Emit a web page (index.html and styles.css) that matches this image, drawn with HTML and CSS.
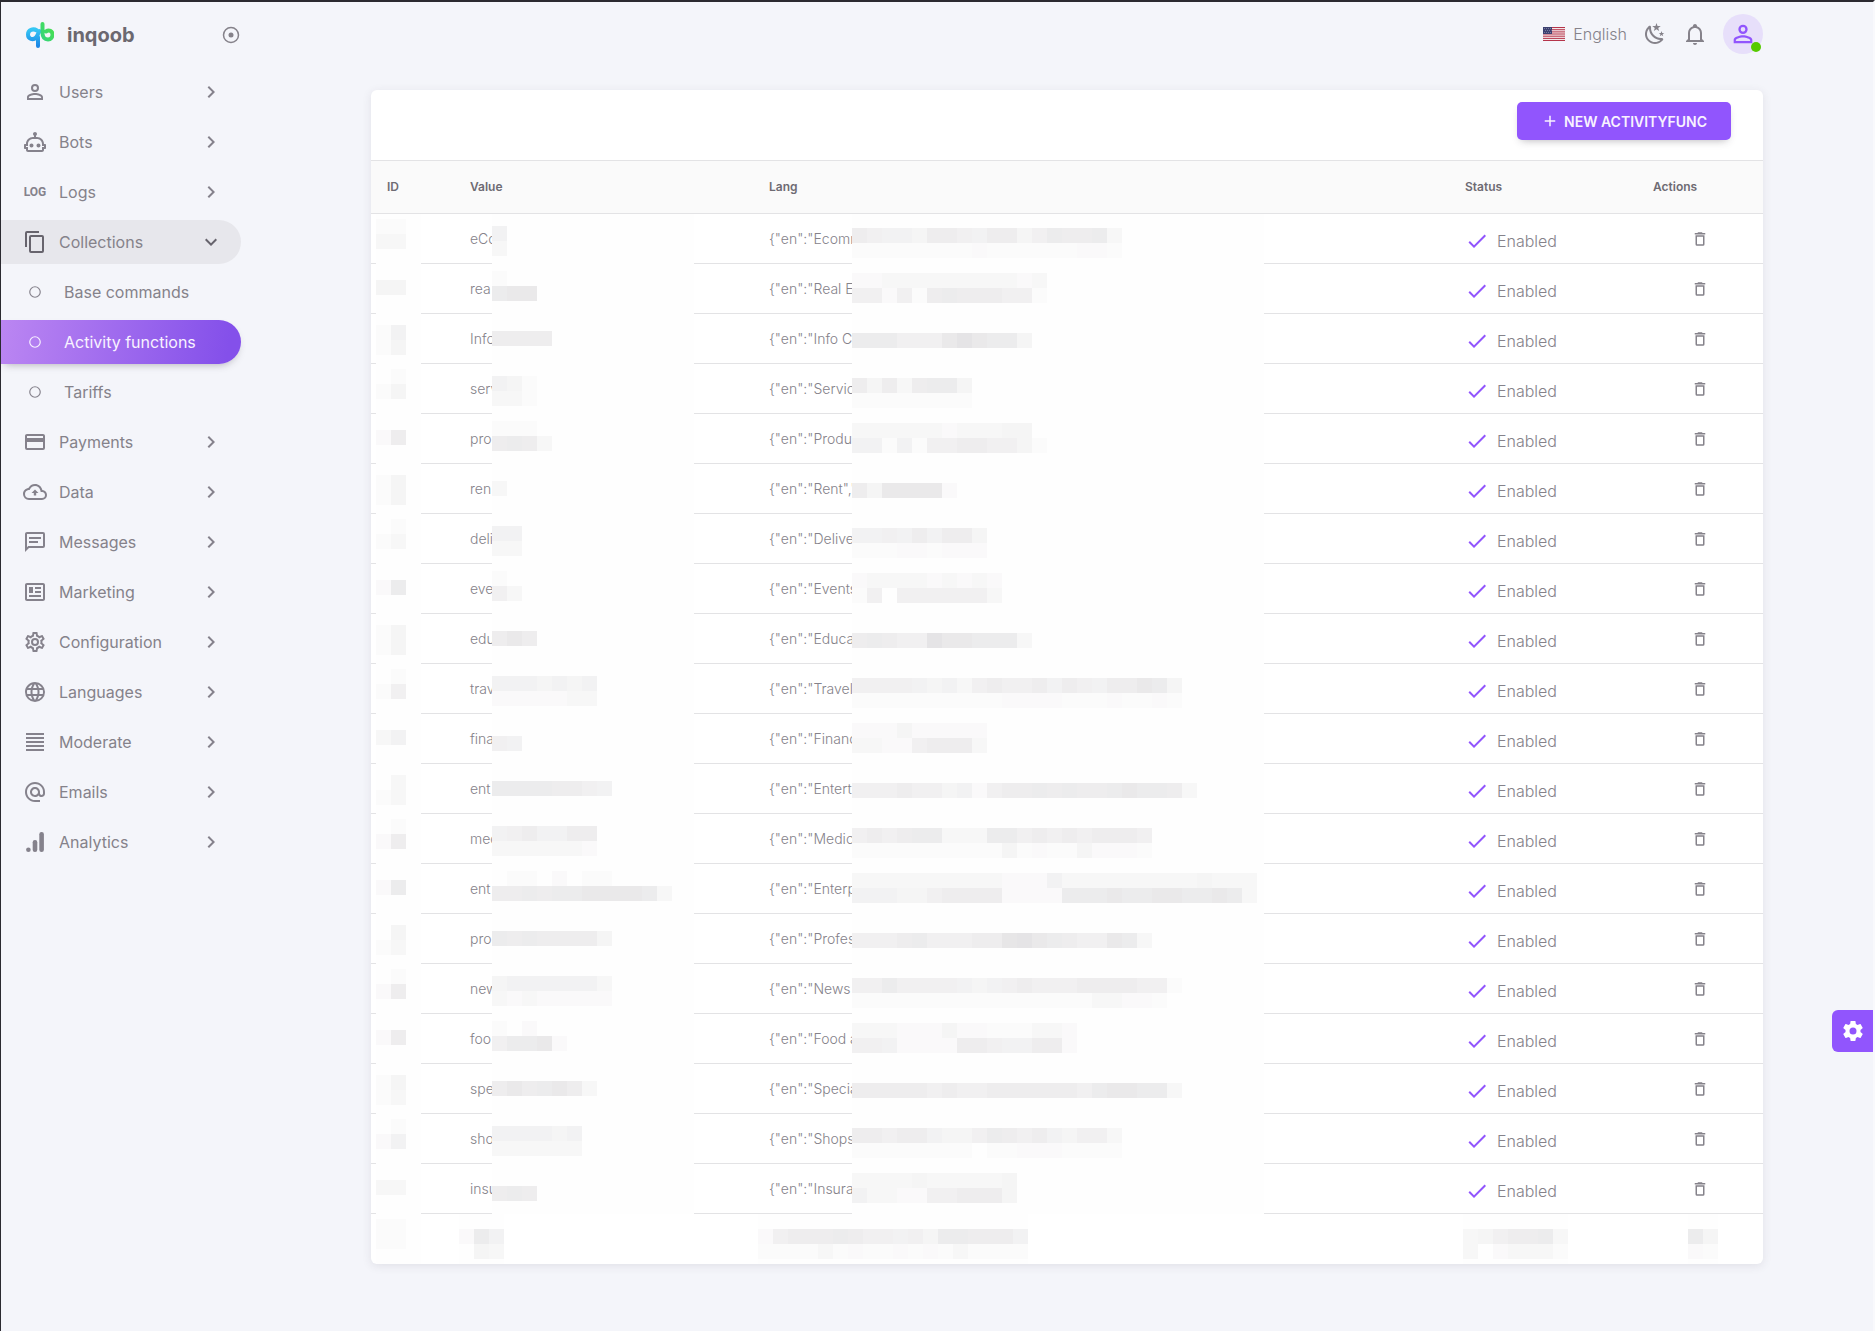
FILE: index.html
```html
<!DOCTYPE html>
<html lang="en">
<head>
    <meta charset="UTF-8">
    <meta name="viewport" content="width=device-width, initial-scale=1.0">
    <title>inqoob - Activity functions</title>
    <link rel="stylesheet" href="styles.css">
</head>
<body>
    <svg class="sprite" aria-hidden="true">
        <symbol id="chevron" viewBox="0 0 24 24"><path d="M8.59,16.58L13.17,12L8.59,7.41L10,6L16,12L10,18L8.59,16.58Z"/></symbol>
        <symbol id="account" viewBox="0 0 24 24"><path d="M12,4A4,4 0 0,1 16,8A4,4 0 0,1 12,12A4,4 0 0,1 8,8A4,4 0 0,1 12,4M12,6A2,2 0 0,0 10,8A2,2 0 0,0 12,10A2,2 0 0,0 14,8A2,2 0 0,0 12,6M12,13C14.67,13 20,14.33 20,17V20H4V17C4,14.33 9.33,13 12,13M12,14.9C9.03,14.9 5.9,16.36 5.9,17V18.1H18.1V17C18.1,16.36 14.97,14.9 12,14.9Z"/></symbol>
        <symbol id="robot" viewBox="0 0 24 24"><path d="M17.5 15.5C17.5 16.61 16.61 17.5 15.5 17.5S13.5 16.61 13.5 15.5 14.4 13.5 15.5 13.5 17.5 14.4 17.5 15.5M8.5 13.5C7.4 13.5 6.5 14.4 6.5 15.5S7.4 17.5 8.5 17.5 10.5 16.61 10.5 15.5 9.61 13.5 8.5 13.5M23 15V18C23 18.55 22.55 19 22 19H21V20C21 21.11 20.11 22 19 22H5C3.9 22 3 21.11 3 20V19H2C1.45 19 1 18.55 1 18V15C1 14.45 1.45 14 2 14H3C3 10.13 6.13 7 10 7H11V5.73C10.4 5.39 10 4.74 10 4C10 2.9 10.9 2 12 2S14 2.9 14 4C14 4.74 13.6 5.39 13 5.73V7H14C17.87 7 21 10.13 21 14H22C22.55 14 23 14.45 23 15M21 16H19V14C19 11.24 16.76 9 14 9H10C7.24 9 5 11.24 5 14V16H3V17H5V20H19V17H21V16Z"/></symbol>
        <symbol id="copy" viewBox="0 0 24 24"><path d="M19,21H8V7H19M19,5H8A2,2 0 0,0 6,7V21A2,2 0 0,0 8,23H19A2,2 0 0,0 21,21V7A2,2 0 0,0 19,5M16,1H4A2,2 0 0,0 2,3V17H4V3H16V1Z"/></symbol>
        <symbol id="ring" viewBox="0 0 24 24"><circle cx="12" cy="12" r="9" fill="none" stroke="currentColor" stroke-width="2"/></symbol>
        <symbol id="card" viewBox="0 0 24 24"><path d="M20,8H4V6H20M20,18H4V12H20M20,4H4C2.89,4 2,4.89 2,6V18A2,2 0 0,0 4,20H20A2,2 0 0,0 22,18V6C22,4.89 21.1,4 20,4Z"/></symbol>
        <symbol id="cloud" viewBox="0 0 24 24"><path d="M19.35,10.03C18.67,6.59 15.64,4 12,4C9.11,4 6.6,5.64 5.35,8.03C2.34,8.36 0,10.9 0,14A6,6 0 0,0 6,20H19A5,5 0 0,0 24,15C24,12.36 21.95,10.22 19.35,10.03M19,18H6A4,4 0 0,1 2,14C2,11.95 3.53,10.24 5.56,10.03L6.63,9.92L7.13,8.97C8.08,7.14 9.94,6 12,6C14.62,6 16.88,7.86 17.39,10.43L17.69,11.93L19.22,12.04C20.78,12.14 22,13.45 22,15A3,3 0 0,1 19,18M8.5,13H10.8V15.5H13.2V13H15.5L12,9.5L8.5,13Z"/></symbol>
        <symbol id="message" viewBox="0 0 24 24"><path d="M4,2H20A2,2 0 0,1 22,4V16A2,2 0 0,1 20,18H6L2,22V4C2,2.89 2.9,2 4,2M4,4V17.17L5.17,16H20V4H4M6,7H18V9H6V7M6,11H15V13H6V11Z"/></symbol>
        <symbol id="newspaper" viewBox="0 0 24 24"><path d="M20 5L20 19L4 19L4 5H20M20 3H4C2.89 3 2 3.89 2 5V19C2 20.11 2.89 21 4 21H20C21.11 21 22 20.11 22 19V5C22 3.89 21.11 3 20 3M18 15H6V17H18V15M10 7H6V13H10V7M12 9H18V7H12V9M18 11H12V13H18V11Z"/></symbol>
        <symbol id="cog-outline" viewBox="0 0 24 24"><path d="M12,8A4,4 0 0,1 16,12A4,4 0 0,1 12,16A4,4 0 0,1 8,12A4,4 0 0,1 12,8M12,10A2,2 0 0,0 10,12A2,2 0 0,0 12,14A2,2 0 0,0 14,12A2,2 0 0,0 12,10M10,22C9.75,22 9.54,21.82 9.5,21.58L9.13,18.93C8.5,18.68 7.96,18.34 7.44,17.94L4.95,18.95C4.73,19.03 4.46,18.95 4.34,18.73L2.34,15.27C2.21,15.05 2.27,14.78 2.46,14.63L4.57,12.97L4.5,12L4.57,11L2.46,9.37C2.27,9.22 2.21,8.95 2.34,8.73L4.34,5.27C4.46,5.05 4.73,4.96 4.95,5.05L7.44,6.05C7.96,5.66 8.5,5.32 9.13,5.07L9.5,2.42C9.54,2.18 9.75,2 10,2H14C14.25,2 14.46,2.18 14.5,2.42L14.87,5.07C15.5,5.32 16.04,5.66 16.56,6.05L19.05,5.05C19.27,4.96 19.54,5.05 19.66,5.27L21.66,8.73C21.79,8.95 21.73,9.22 21.54,9.37L19.43,11L19.5,12L19.43,13L21.54,14.63C21.73,14.78 21.79,15.05 21.66,15.27L19.66,18.73C19.54,18.95 19.27,19.04 19.05,18.95L16.56,17.95C16.04,18.34 15.5,18.68 14.87,18.93L14.5,21.58C14.46,21.82 14.25,22 14,22H10M11.25,4L10.88,6.61C9.68,6.86 8.62,7.5 7.85,8.39L5.44,7.35L4.69,8.65L6.8,10.2C6.4,11.37 6.4,12.64 6.8,13.8L4.68,15.36L5.43,16.66L7.86,15.62C8.63,16.5 9.68,17.14 10.87,17.38L11.24,20H12.76L13.13,17.39C14.32,17.14 15.37,16.5 16.14,15.62L18.57,16.66L19.32,15.36L17.2,13.81C17.6,12.64 17.6,11.37 17.2,10.2L19.31,8.65L18.56,7.35L16.15,8.39C15.38,7.5 14.32,6.86 13.12,6.62L12.75,4H11.25Z"/></symbol>
        <symbol id="web" viewBox="0 0 24 24"><path d="M16.36,14C16.44,13.34 16.5,12.68 16.5,12C16.5,11.32 16.44,10.66 16.36,10H19.74C19.9,10.64 20,11.31 20,12C20,12.69 19.9,13.36 19.74,14M14.59,19.56C15.19,18.45 15.65,17.25 15.97,16H18.92C17.96,17.65 16.43,18.93 14.59,19.56M14.34,14H9.66C9.56,13.34 9.5,12.68 9.5,12C9.5,11.32 9.56,10.65 9.66,10H14.34C14.43,10.65 14.5,11.32 14.5,12C14.5,12.68 14.43,13.34 14.34,14M12,19.96C11.17,18.76 10.5,17.43 10.09,16H13.91C13.5,17.43 12.83,18.76 12,19.96M8,8H5.08C6.03,6.34 7.57,5.06 9.4,4.44C8.8,5.55 8.35,6.75 8,8M5.08,16H8C8.35,17.25 8.8,18.45 9.4,19.56C7.57,18.93 6.03,17.65 5.08,16M4.26,14C4.1,13.36 4,12.69 4,12C4,11.31 4.1,10.64 4.26,10H7.64C7.56,10.66 7.5,11.32 7.5,12C7.5,12.68 7.56,13.34 7.64,14M12,4.03C12.83,5.23 13.5,6.57 13.91,8H10.09C10.5,6.57 11.17,5.23 12,4.03M18.92,8H15.97C15.65,6.75 15.19,5.55 14.59,4.44C16.43,5.07 17.96,6.34 18.92,8M12,2C6.47,2 2,6.5 2,12A10,10 0 0,0 12,22A10,10 0 0,0 22,12A10,10 0 0,0 12,2Z"/></symbol>
        <symbol id="lines" viewBox="0 0 24 24"><path d="M3,3H21V5H3V3M3,7H21V9H3V7M3,11H21V13H3V11M3,15H21V17H3V15M3,19H21V21H3V19Z"/></symbol>
        <symbol id="at" viewBox="0 0 24 24"><path d="M12,15C12.81,15 13.5,14.7 14.11,14.11C14.7,13.5 15,12.81 15,12C15,11.19 14.7,10.5 14.11,9.89C13.5,9.3 12.81,9 12,9C11.19,9 10.5,9.3 9.89,9.89C9.3,10.5 9,11.19 9,12C9,12.81 9.3,13.5 9.89,14.11C10.5,14.7 11.19,15 12,15M12,2C14.75,2 17.1,3 19.05,4.95C21,6.9 22,9.25 22,12V13.45C22,14.45 21.65,15.3 21,16C20.3,16.67 19.5,17 18.5,17C17.3,17 16.31,16.5 15.56,15.5C14.56,16.5 13.38,17 12,17C10.63,17 9.45,16.5 8.46,15.54C7.5,14.55 7,13.38 7,12C7,10.63 7.5,9.45 8.46,8.46C9.45,7.5 10.63,7 12,7C13.38,7 14.55,7.5 15.54,8.46C16.5,9.45 17,10.63 17,12V13.45C17,13.86 17.16,14.22 17.46,14.53C17.76,14.84 18.11,15 18.5,15C18.92,15 19.27,14.84 19.57,14.53C19.87,14.22 20,13.86 20,13.45V12C20,9.81 19.23,7.93 17.65,6.35C16.07,4.77 14.19,4 12,4C9.81,4 7.93,4.77 6.35,6.35C4.77,7.93 4,9.81 4,12C4,14.19 4.77,16.07 6.35,17.65C7.93,19.23 9.81,20 12,20H17V22H12C9.25,22 6.9,21 4.95,19.05C3,17.1 2,14.75 2,12C2,9.25 3,6.9 4.95,4.95C6.9,3 9.25,2 12,2Z"/></symbol>
        <symbol id="analytics" viewBox="0 0 24 24"><circle cx="5.4" cy="19.7" r="2.3"/><rect x="9.7" y="10" width="4.6" height="12" rx="2.2"/><rect x="16.3" y="2" width="4.6" height="20" rx="2.2"/></symbol>
        <symbol id="moon" viewBox="0 0 24 24"><path d="M17.75,4.09L15.22,6.03L16.13,9.09L13.5,7.28L10.87,9.09L11.78,6.03L9.25,4.09L12.44,4L13.5,1L14.56,4L17.75,4.09M21.25,11L19.61,12.25L20.2,14.23L18.5,13.06L16.8,14.23L17.39,12.25L15.75,11L17.81,10.95L18.5,9L19.19,10.95L21.25,11M18.97,15.95C19.8,15.87 20.69,17.05 20.16,17.8C19.84,18.25 19.5,18.67 19.08,19.07C15.17,23 8.84,23 4.94,19.07C1.03,15.17 1.03,8.83 4.94,4.93C5.34,4.53 5.76,4.17 6.21,3.85C6.96,3.32 8.14,4.21 8.06,5.04C7.79,7.9 8.75,10.87 10.95,13.06C13.14,15.26 16.1,16.22 18.97,15.95M17.33,17.97C14.5,17.81 11.7,16.64 9.53,14.5C7.36,12.31 6.2,9.5 6.04,6.68C3.23,9.82 3.34,14.64 6.35,17.66C9.37,20.67 14.19,20.78 17.33,17.97Z"/></symbol>
        <symbol id="bell" viewBox="0 0 24 24"><path d="M10 21H14C14 22.1 13.1 23 12 23S10 22.1 10 21M21 19V20H3V19L5 17V11C5 7.9 7.03 5.17 10 4.29C10 4.19 10 4.1 10 4C10 2.9 10.9 2 12 2S14 2.9 14 4C14 4.1 14 4.19 14 4.29C16.97 5.17 19 7.9 19 11V17L21 19M17 11C17 8.24 14.76 6 12 6S7 8.24 7 11V18H17V11Z"/></symbol>
        <symbol id="plus" viewBox="0 0 24 24"><path d="M19,13H13V19H11V13H5V11H11V5H13V11H19V13Z"/></symbol>
        <symbol id="check" viewBox="0 0 24 24"><path d="M21,7L9,19L3.5,13.5L4.91,12.09L9,16.17L19.59,5.59L21,7Z"/></symbol>
        <symbol id="trash" viewBox="0 0 24 24"><path d="M6,19A2,2 0 0,0 8,21H16A2,2 0 0,0 18,19V7H6V19M8,9H16V19H8V9M15.5,4L14.5,3H9.5L8.5,4H5V6H19V4H15.5Z"/></symbol>
        <symbol id="cog" viewBox="0 0 24 24"><path d="M12,15.5A3.5,3.5 0 0,1 8.5,12A3.5,3.5 0 0,1 12,8.5A3.5,3.5 0 0,1 15.5,12A3.5,3.5 0 0,1 12,15.5M19.43,12.97C19.47,12.65 19.5,12.33 19.5,12C19.5,11.67 19.47,11.34 19.43,11L21.54,9.37C21.73,9.22 21.78,8.95 21.66,8.73L19.66,5.27C19.54,5.05 19.27,4.96 19.05,5.05L16.56,6.05C16.04,5.66 15.5,5.32 14.87,5.07L14.5,2.42C14.46,2.18 14.25,2 14,2H10C9.75,2 9.54,2.18 9.5,2.42L9.13,5.07C8.5,5.32 7.96,5.66 7.44,6.05L4.95,5.05C4.73,4.96 4.46,5.05 4.34,5.27L2.34,8.73C2.21,8.95 2.27,9.22 2.46,9.37L4.57,11C4.53,11.34 4.5,11.67 4.5,12C4.5,12.33 4.53,12.65 4.57,12.97L2.46,14.63C2.27,14.78 2.21,15.05 2.34,15.27L4.34,18.73C4.46,18.95 4.73,19.03 4.95,18.95L7.44,17.94C7.96,18.34 8.5,18.68 9.13,18.93L9.5,21.58C9.54,21.82 9.75,22 10,22H14C14.25,22 14.46,21.82 14.5,21.58L14.87,18.93C15.5,18.67 16.04,18.34 16.56,17.94L19.05,18.95C19.27,19.03 19.54,18.95 19.66,18.73L21.66,15.27C21.78,15.05 21.73,14.78 21.54,14.63L19.43,12.97Z"/></symbol>
    </svg>

    <div class="layout">
        <aside class="sidebar">
            <div class="brand">
                <a href="#" class="brand-link">
                    <svg class="brand-logo" viewBox="0 0 28 28" fill="none" stroke-width="4" stroke-linecap="round" aria-hidden="true">
                        <defs>
                            <linearGradient id="blue" x1="0" y1="0" x2="0" y2="1"><stop offset="0" stop-color="#35c6f4"/><stop offset="1" stop-color="#1b86e6"/></linearGradient>
                            <linearGradient id="green" x1="1" y1="0" x2="0" y2="1"><stop offset="0" stop-color="#4be04a"/><stop offset="1" stop-color="#35d47c"/></linearGradient>
                        </defs>
                        <path stroke="url(#blue)" d="M11 9.5C7 7 2 9 2 13.500C2 18 7 19.500 10 16.500C12 14.500 12 12 13.500 10M12 16V25"/>
                        <path stroke="url(#green)" d="M16.500 3V12C16.500 16 18.500 18.500 22 18.500C25 18.500 26.500 16 26.500 13.500C26.500 10 23 8.500 20 10.500"/>
                    </svg>
                    <h1>inqoob</h1>
                </a>
                <button type="button" class="pin" aria-label="Pin menu">
                    <svg viewBox="0 0 20 20" aria-hidden="true"><circle cx="10" cy="10" r="7.500" fill="none" stroke="currentColor" stroke-width="1.500"/><circle cx="10" cy="10" r="2.500"/></svg>
                </button>
            </div>
            <nav>
                <ul class="menu">
                    <li><a href="#"><svg class="icon"><use href="#account"/></svg>Users<svg class="icon arrow"><use href="#chevron"/></svg></a></li>
                    <li><a href="#"><svg class="icon"><use href="#robot"/></svg>Bots<svg class="icon arrow"><use href="#chevron"/></svg></a></li>
                    <li><a href="#"><span class="icon log">LOG</span>Logs<svg class="icon arrow"><use href="#chevron"/></svg></a></li>
                    <li>
                        <a href="#" class="open"><svg class="icon"><use href="#copy"/></svg>Collections<svg class="icon arrow"><use href="#chevron"/></svg></a>
                        <ul class="submenu">
                            <li><a href="#"><svg class="icon"><use href="#ring"/></svg>Base commands</a></li>
                            <li><a href="#" class="active"><svg class="icon"><use href="#ring"/></svg>Activity functions</a></li>
                            <li><a href="#"><svg class="icon"><use href="#ring"/></svg>Tariffs</a></li>
                        </ul>
                    </li>
                    <li><a href="#"><svg class="icon"><use href="#card"/></svg>Payments<svg class="icon arrow"><use href="#chevron"/></svg></a></li>
                    <li><a href="#"><svg class="icon"><use href="#cloud"/></svg>Data<svg class="icon arrow"><use href="#chevron"/></svg></a></li>
                    <li><a href="#"><svg class="icon"><use href="#message"/></svg>Messages<svg class="icon arrow"><use href="#chevron"/></svg></a></li>
                    <li><a href="#"><svg class="icon"><use href="#newspaper"/></svg>Marketing<svg class="icon arrow"><use href="#chevron"/></svg></a></li>
                    <li><a href="#"><svg class="icon"><use href="#cog-outline"/></svg>Configuration<svg class="icon arrow"><use href="#chevron"/></svg></a></li>
                    <li><a href="#"><svg class="icon"><use href="#web"/></svg>Languages<svg class="icon arrow"><use href="#chevron"/></svg></a></li>
                    <li><a href="#"><svg class="icon"><use href="#lines"/></svg>Moderate<svg class="icon arrow"><use href="#chevron"/></svg></a></li>
                    <li><a href="#"><svg class="icon"><use href="#at"/></svg>Emails<svg class="icon arrow"><use href="#chevron"/></svg></a></li>
                    <li><a href="#"><svg class="icon"><use href="#analytics"/></svg>Analytics<svg class="icon arrow"><use href="#chevron"/></svg></a></li>
                </ul>
            </nav>
        </aside>

        <div class="content">
            <header class="topbar">
                <button type="button" class="language">
                    <svg class="flag" viewBox="0 0 22 14" aria-hidden="true">
                        <rect width="22" height="14" fill="#f3e6e8"/>
                        <path stroke="#b5344a" d="M0 .5H22M0 2.700H22M0 4.900H22M0 7H22M0 9.200H22M0 11.400H22M0 13.500H22"/>
                        <rect width="9" height="7" fill="#3c4070"/>
                        <path stroke="#a9abc4" stroke-width=".7" stroke-dasharray=".8 1.200" d="M1 1.500H8.500M2 3.500H8.500M1 5.500H8.500"/>
                    </svg>
                    English
                </button>
                <button type="button" class="icon-button" aria-label="Dark mode"><svg class="icon"><use href="#moon"/></svg></button>
                <button type="button" class="icon-button" aria-label="Notifications"><svg class="icon"><use href="#bell"/></svg></button>
                <button type="button" class="avatar" aria-label="Account"><svg class="icon"><use href="#account"/></svg></button>
            </header>
            <main class="panel">
                <div class="panel-head">
                    <button type="button" class="new-button"><svg class="icon"><use href="#plus"/></svg>New activityfunc</button>
                </div>
                <table>
                    <thead>
                        <tr>
                            <th class="col-id">ID</th>
                            <th class="col-value">Value</th>
                            <th>Lang</th>
                            <th class="col-status">Status</th>
                            <th class="col-actions">Actions</th>
                        </tr>
                    </thead>
                    <tbody id="rows"></tbody>
                </table>
            </main>
        </div>
    </div>
    <button type="button" class="customizer" aria-label="Settings"><svg class="icon"><use href="#cog"/></svg></button>
    <script src="script.js"></script>
</body>
</html>
```

FILE: styles.css
```css
* {
    box-sizing: border-box;
}
body {
    margin: 0;
    min-height: 100vh;
    border-top: 2px solid #2b2a30;
    border-left: 1px solid #2b2a30;
    border-right: 2px solid #f9f9fc;
    background-color: #f4f5fa;
    color: #85828a;
    font-family: 'Inter', sans-serif;
    font-size: 16px;
}
button {
    padding: 0;
    border: 0;
    background: none;
    color: inherit;
    font: inherit;
    cursor: pointer;
}
a {
    color: inherit;
    text-decoration: none;
}
ul {
    list-style: none;
    margin: 0;
    padding: 0;
}
.sprite {
    display: none;
}
.icon {
    width: 24px;
    height: 24px;
    flex: none;
    fill: currentColor;
}
.layout {
    display: flex;
}

/* Sidebar */
.sidebar {
    width: 260px;
    flex: none;
    padding-right: 20px;
}
.brand {
    display: flex;
    align-items: center;
    justify-content: space-between;
    height: 66px;
    margin-bottom: 2px;
    padding-left: 25px;
}
.brand-link {
    display: flex;
    align-items: center;
    gap: 13px;
}
.brand-logo {
    width: 28px;
    height: 28px;
}
.brand h1 {
    margin: 0;
    color: #6b6870;
    font-size: 20px;
    font-weight: 700;
}
.pin svg {
    display: block;
    width: 20px;
    height: 20px;
    fill: currentColor;
}
.menu a {
    display: flex;
    align-items: center;
    gap: 12px;
    height: 44px;
    margin-bottom: 6px;
    padding: 0 18px 0 22px;
    border-radius: 0 22px 22px 0;
    color: #85828a;
}
.menu .icon {
    color: #85828c;
}
.menu .arrow {
    margin-left: auto;
}
.menu .log {
    font-family: 'Roboto', sans-serif;
    font-size: 12px;
    font-weight: 700;
    line-height: 24px;
    text-align: center;
}
.menu .open {
    background-color: #e7e7ec;
}
.menu .open .icon {
    color: #67646d;
}
.menu .open .arrow {
    transform: rotate(90deg);
}
.menu .submenu a {
    gap: 22px;
    padding-left: 27px;
}
.menu .submenu .icon {
    width: 14px;
    height: 14px;
}
.menu .submenu .active {
    background: linear-gradient(98deg, #bb86f2, #8450ea 94%);
    box-shadow: 0 4px 8px -4px rgba(58, 53, 65, 0.4);
    color: #f8f2ff;
}
.menu .submenu .active .icon {
    color: #f8f2ff;
}

/* Top bar */
.content {
    flex: 1;
    min-width: 0;
    max-width: 1440px;
    margin: 0 auto;
    padding: 0 24px 24px;
}
.topbar {
    display: flex;
    align-items: center;
    justify-content: flex-end;
    gap: 16px;
    height: 64px;
    margin-bottom: 24px;
}
.language {
    display: flex;
    align-items: center;
    gap: 8px;
    font-weight: 300;
}
.flag {
    width: 22px;
    height: 14px;
}
.icon-button .icon {
    display: block;
}
.avatar {
    position: relative;
    display: flex;
    align-items: center;
    justify-content: center;
    width: 40px;
    height: 40px;
    border-radius: 50%;
    background-color: #e7dffa;
    color: #9155fd;
}
.avatar .icon {
    width: 28px;
    height: 28px;
}
.avatar::after {
    content: '';
    position: absolute;
    right: 2px;
    bottom: 2px;
    width: 10px;
    height: 10px;
    border-radius: 50%;
    background-color: #56ca00;
}

/* Table card */
.panel {
    overflow: hidden;
    border-radius: 6px;
    background-color: #fff;
    box-shadow: 0 2px 10px rgba(58, 53, 65, 0.1);
}
.panel-head {
    display: flex;
    justify-content: flex-end;
    padding: 12px 32px 20px;
}
.new-button {
    display: flex;
    align-items: center;
    gap: 5px;
    height: 38px;
    padding: 0 24px;
    border-radius: 5px;
    background-color: #9155fd;
    box-shadow: 0 4px 8px -4px rgba(58, 53, 65, 0.4);
    color: #f8f2ff;
    font-size: 14px;
    font-weight: 600;
    text-transform: uppercase;
}
.new-button .icon {
    width: 18px;
    height: 18px;
}
table {
    width: 100%;
    border-collapse: separate;
    border-spacing: 0;
    table-layout: fixed;
}
th {
    height: 54px;
    padding: 0 16px 2px;
    border-top: 1px solid #e3e3e5;
    border-bottom: 1px solid #e3e3e5;
    background-color: #fafafa;
    color: #6e6b73;
    font-size: 12px;
    font-weight: 600;
    text-align: left;
}
td {
    position: relative;
    height: 50px;
    padding: 0 16px;
    border-bottom: 1px solid #e3e3e5;
    color: #85828a;
    font-size: 14px;
    font-weight: 300;
    white-space: nowrap;
}
tr:last-child td {
    border-bottom: 0;
}
.col-id {
    width: 83px;
}
.col-value {
    width: 299px;
}
.col-status {
    width: 188px;
}
.col-actions {
    width: 126px;
}
.status {
    display: flex;
    align-items: center;
    gap: 8px;
    padding-top: 4px;
    font-size: 16px;
}
.status .icon {
    color: #9155fd;
}
.delete {
    display: block;
    margin: 0 auto;
}
.delete .icon {
    display: block;
    width: 18px;
    height: 18px;
}

/* Pixelated cover over private cell text, it also hides the row line */
.mask {
    position: absolute;
    top: 0;
    left: 5px;
    width: 45px;
    height: 50px;
    background-color: #fefefe;
}
.mask-value {
    left: 38px;
    width: 202px;
}
.mask-lang {
    left: 99px;
    width: 412px;
}
.mask-total {
    width: 270px;
}
.mask-status {
    left: 14px;
    width: 105px;
}
.mask-actions {
    left: 51px;
    width: 30px;
}

.customizer {
    position: fixed;
    top: 1010px;
    right: 2px;
    display: flex;
    align-items: center;
    justify-content: center;
    width: 41px;
    height: 42px;
    border-radius: 6px 0 0 6px;
    background-color: #9155fd;
    color: #fff;
}
```

FILE: script.js
```js
// Each row: value, lang, then cover shades for the id, value and lang cells.
// A digit is one 15px block (percent of black, hex), "/" starts a new line.
const rows = [
    ['eCom', 'Ecomm', '11/33', '5/3', '765547765774687783/111111112111111221'],
    ['rea', 'Real E', '44', '1/899', '2233333333323/6626178777661'],
    ['Info', 'Info Co', '15/14', '7777', '8886669b9884'],
    ['serv', 'Servic', '01/14', '541/331', '74737884/11111111'],
    ['pro', 'Produc', '27', '111/7873', '333333233344/5515166776641'],
    ['ren', 'Rent","', '14/14', '3', '7499992'],
    ['deli', 'Deliver', '01/13', '55/33', '556575774/111221222'],
    ['eve', 'Events', '28', '1/63', '2333323232/1606666663'],
    ['edu', 'Educat', '14/14', '797', '78766b998883'],
    ['trav', 'Travel', '01/16', '5554545/2222233', '6666545367667576577984/1111111111222211121121'],
    ['fina', 'Financ', '35', '0/65', '222422222/332267773'],
    ['ent', 'Entert', '03/13', '88887765', '66676645267787877898873'],
    ['med', 'Medic', '01/27', '5675577/3333332', '67678833388676767776/11111111114121142221'],
    ['ent', 'Enterp', '28', '01102011/778788999983', '333333333322253333333334333/555446777722228889889988983'],
    ['pro', 'Profes', '04/13', '87877774', '6667866677ab98766983'],
    ['new', 'News a', '01/27', '45555553/32322222', '6686666545676667777661/111111111111111133221'],
    ['foo', 'Food a', '27', '1020/68892', '333222422111332/665222277655772'],
    ['spe', 'Specia', '14/13', '7978973', '7777767667777776899883'],
    ['sho', 'Shops', '01/25', '555545/333333', '776775446876754663/111111110112221111'],
    ['insu', 'Insura', '33', '0/787', '33334333334/53322667774'],
];

// Block offsets from the top of a row repeat every three rows.
const offsets = { id: [5, 16, 11], value: [12, 7, 17], lang: [14, 9, 19] };

function mask(name, shades, top) {
    let rects = '';
    shades.split('/').forEach((line, y) => {
        [...line].forEach((shade, x) => {
            const level = parseInt(shade, 16);
            if (level) {
                rects += `<rect x="${x * 15}" y="${top + y * 15}" width="15" height="15" fill="#1c1420" fill-opacity="${level / 100}"/>`;
            }
        });
    });
    return `<svg class="mask mask-${name}" aria-hidden="true">${rects}</svg>`;
}

const body = rows.map(([value, lang, id, valueShades, langShades], i) => `
    <tr>
        <td>${mask('id', id, offsets.id[i % 3])}</td>
        <td>${value}${mask('value', valueShades, offsets.value[i % 3])}</td>
        <td>{"en":"${lang}${mask('lang', langShades, offsets.lang[i % 3])}</td>
        <td><div class="status"><svg class="icon"><use href="#check"/></svg>Enabled</div></td>
        <td><button type="button" class="delete" aria-label="Delete"><svg class="icon"><use href="#trash"/></svg></button></td>
    </tr>`).join('');

const last = `
    <tr>
        <td>${mask('id', '11/11', 5)}</td>
        <td>${mask('id', '285/043', 15)}</td>
        <td>${mask('total', '267778766564887775/111131211212131111', 15)}</td>
        <td>${mask('status', '3467783/3023331', 15)}</td>
        <td>${mask('actions', '84/21', 15)}</td>
    </tr>`;

document.getElementById('rows').innerHTML = body + last;
```
